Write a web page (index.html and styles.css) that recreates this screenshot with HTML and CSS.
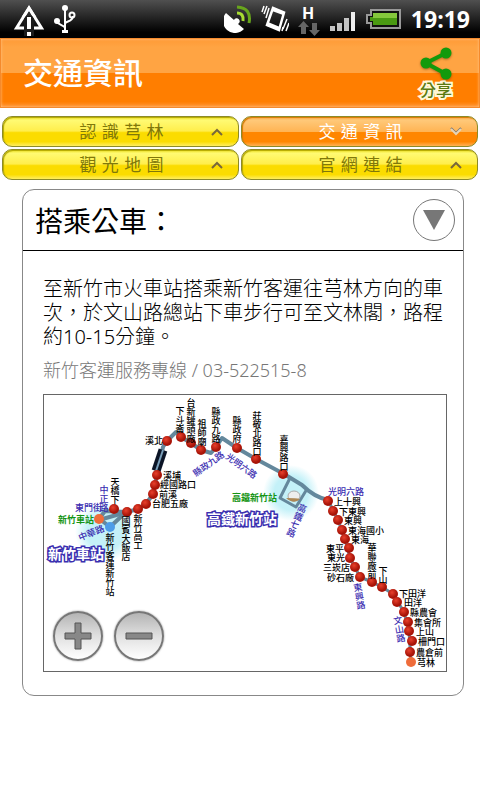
FILE: index.html
```html
<!DOCTYPE html>
<html lang="zh-Hant">
<head>
    <meta charset="UTF-8">
    <meta name="viewport" content="width=device-width, initial-scale=1">
    <title>交通資訊</title>
    <link rel="stylesheet" href="styles.css">
</head>
<body>
    <div class="status-bar">
        <svg width="32" height="34" viewBox="0 0 32 34">
            <path d="M3.500 26L16 6L28.500 26Z" fill="none" stroke="#fff" stroke-width="3"/>
            <path d="M11 14h10v20h-10z" fill="#1c1c1c"/>
            <path d="M10 15.500L16 6L22 15.500" fill="none" stroke="#fff" stroke-width="3"/>
            <path d="M14 15h4v12h-4zM14 30h4v4h-4z" fill="#fff"/>
        </svg>
        <svg width="24" height="30" viewBox="0 0 24 30">
            <g fill="none" stroke="#fff" stroke-width="2">
                <path d="M12 4V27M4 17C4 21 12 21 12 24M20 12C20 18 12 17 12 20" />
                <circle cx="19" cy="11" r="2.500"/>
            </g>
            <g fill="#fff">
                <circle cx="12" cy="4" r="3"/>
                <circle cx="4" cy="17" r="3"/>
                <path d="M9 26h6v3h-6z"/>
            </g>
        </svg>
        <div class="status-right">
            <svg width="28" height="28" viewBox="0 0 28 28">
                <path d="M2 8A12 12 0 0 0 20 24L14 19A3 3 0 1 0 10 15Z" fill="#fff"/>
                <path d="M13 8Q20 8 19 16" fill="none" stroke="#a7dc32" stroke-width="3"/>
                <path d="M13 2Q28 3 25 18" fill="none" stroke="#68a51c" stroke-width="3"/>
            </svg>
            <svg width="28" height="28" viewBox="0 0 28 28">
                <path d="M12 3L23 7.500L18 25L6 20Z" fill="none" stroke="#fff" stroke-width="2.500"/>
                <path d="M12 3L23 7L22 10L11 6ZM7 17L19 22L18 25L6 21Z" fill="#fff"/>
                <path d="M6 1L3 9M3 1L1 7M8 3L5 13M26 14L22 24M28 18L25 26M22 22L21 26" fill="none" stroke="#fff" stroke-width="1.500"/>
            </svg>
            <svg class="icon-data" width="22" height="34" viewBox="0 0 22 34">
                <text x="10" y="17" text-anchor="middle">H</text>
                <path d="M5.500 19L11 25H8V32H3V25H0ZM16.500 34L11 28H14V21H19V28H22Z" fill="#666"/>
            </svg>
            <svg width="28" height="28" viewBox="0 0 28 28">
                <path d="M1 21h5v5h-5zM8 18h5v8h-5zM15 13h5v13h-5z" fill="#c4c4c4"/>
                <path d="M22 7h4v19h-4z" fill="#eee"/>
            </svg>
            <svg width="36" height="22" viewBox="0 0 36 22">
                <path d="M5 2H34V20H5V15H1V7H5Z" fill="#111" stroke="#999" stroke-width="2"/>
                <path d="M7 5H31V17H7V13H4V9H7Z" fill="#4a9a12"/>
                <path d="M7 5H31V10H7Z" fill="#85c83c"/>
            </svg>
            <span class="clock">19:19</span>
        </div>
    </div>

    <header class="app-header">
        <h1>交通資訊</h1>
        <button type="button" class="share-btn">
            <svg width="34" height="34" viewBox="0 0 34 34">
                <path d="M27 7L7 17L27 28" fill="none" stroke="#129a0c" stroke-width="4"/>
                <g fill="#129a0c">
                    <circle cx="27" cy="7" r="5.500"/>
                    <circle cx="7" cy="17" r="5.500"/>
                    <circle cx="27" cy="28" r="5.500"/>
                </g>
            </svg>
            <span>分享</span>
        </button>
    </header>

    <nav class="tabs">
        <button type="button" class="tab">認 識 芎 林
            <svg class="chevron" width="14" height="10" viewBox="0 0 14 10"><path d="M2 8L7 3L12 8"/></svg>
        </button>
        <button type="button" class="tab active">交 通 資 訊
            <svg class="chevron" width="14" height="10" viewBox="0 0 14 10"><path d="M2 2L7 7L12 2"/></svg>
        </button>
        <button type="button" class="tab">觀 光 地 圖
            <svg class="chevron" width="14" height="10" viewBox="0 0 14 10"><path d="M2 8L7 3L12 8"/></svg>
        </button>
        <button type="button" class="tab">官 網 連 結
            <svg class="chevron" width="14" height="10" viewBox="0 0 14 10"><path d="M2 8L7 3L12 8"/></svg>
        </button>
    </nav>

    <main class="card">
        <div class="card-header">
            <h2>搭乘公車：</h2>
            <button type="button" class="toggle-btn" aria-label="收合">
                <svg width="22" height="20" viewBox="0 0 22 20"><path d="M0 0H22L11 20Z" fill="#777"/></svg>
            </button>
        </div>
        <div class="card-body">
            <p class="directions">至新竹市火車站搭乘新竹客運往芎林方向的車次，於文山路總站下車步行可至文林閣，路程約10-15分鐘。</p>
            <p class="phone">新竹客運服務專線 / 03-522515-8</p>

            <div class="map">
                <svg class="route-map" viewBox="0 0 402 276">
                    <defs>
                        <radialGradient id="stop" cx="40%" cy="35%">
                            <stop offset="0" stop-color="#e8402c"/>
                            <stop offset="1" stop-color="#a81408"/>
                        </radialGradient>
                        <radialGradient id="glow">
                            <stop offset="0.6" stop-color="#c4f1f8"/>
                            <stop offset="1" stop-color="#c4f1f8" stop-opacity="0"/>
                        </radialGradient>
                    </defs>

                    <circle cx="61" cy="137" r="30" fill="url(#glow)"/>
                    <circle cx="247" cy="98" r="28" fill="url(#glow)"/>

                    <!-- route -->
                    <g class="route">
                        <path d="M55 125L83 117L94 114L102 109L109 99L113 80L119 52L123 46L132 37L137 42L147 48L157 55L167 58L172 52L178 43L193 53L212 64L240 79L258 90Q270 102 284 105"/>
                        <path d="M55 124L61 116L82 117L66 132L57 125"/>
                        <path d="M246 83L236 103L252 112L263 94" class="thin"/>
                        <path d="M284 105L294 125L301 144L306 163L316 182L328 187L338 192L349 199L360 217L365 236L367 267" class="thin"/>
                    </g>
                    <path d="M119 55L112 76" stroke="#0b1426" stroke-width="9"/>
                    <path d="M119 55L112 76" stroke="#7ba0bb" stroke-width="2"/>
                    <ellipse cx="250" cy="101" rx="6" ry="5" fill="#eee" stroke="#aaa"/>
                    <path d="M242 103Q250 110 256 104Q252 103 242 103" fill="#ad8855"/>

                    <!-- stops -->
                    <g fill="url(#stop)">
                        <circle cx="70" cy="114" r="5"/>
                        <circle cx="83" cy="117" r="5"/>
                        <circle cx="94" cy="114" r="5"/>
                        <circle cx="102" cy="109" r="5"/>
                        <circle cx="109" cy="99" r="5"/>
                        <circle cx="111" cy="90" r="5"/>
                        <circle cx="113" cy="80" r="5"/>
                        <circle cx="123" cy="46" r="5"/>
                        <circle cx="137" cy="42" r="5"/>
                        <circle cx="147" cy="48" r="5"/>
                        <circle cx="157" cy="55" r="5"/>
                        <circle cx="172" cy="52" r="5"/>
                        <circle cx="193" cy="53" r="5"/>
                        <circle cx="212" cy="64" r="5"/>
                        <circle cx="239" cy="79" r="5"/>
                        <circle cx="284" cy="106" r="5"/>
                        <circle cx="289" cy="116" r="5"/>
                        <circle cx="294" cy="125" r="5"/>
                        <circle cx="298" cy="135" r="5"/>
                        <circle cx="301" cy="144" r="5"/>
                        <circle cx="305" cy="153" r="5"/>
                        <circle cx="306" cy="163" r="5"/>
                        <circle cx="311" cy="172" r="5"/>
                        <circle cx="316" cy="182" r="5"/>
                        <circle cx="328" cy="187" r="5"/>
                        <circle cx="338" cy="192" r="5"/>
                        <circle cx="349" cy="199" r="5"/>
                        <circle cx="353" cy="207" r="5"/>
                        <circle cx="360" cy="217" r="5"/>
                        <circle cx="364" cy="227" r="5"/>
                        <circle cx="365" cy="236" r="5"/>
                        <circle cx="368" cy="246" r="5"/>
                        <circle cx="366" cy="257" r="5"/>
                    </g>
                    <circle cx="55" cy="124" r="5" fill="#ef6c3a"/>
                    <circle cx="367" cy="267" r="5" fill="#ef6c3a"/>
                    <circle cx="66" cy="132" r="5" fill="#4d9de8"/>

                    <!-- stop names -->
                    <g class="label">
                        <text x="101" y="49">溪北</text>
                        <text x="119" y="84">溪埔</text>
                        <text x="116" y="93">經國路口</text>
                        <text x="115" y="103">前溪</text>
                        <text x="108" y="112">台肥五廠</text>
                        <text x="290" y="110">上十興</text>
                        <text x="295" y="120">下東興</text>
                        <text x="300" y="129">東興</text>
                        <text x="304" y="139">東海國小</text>
                        <text x="307" y="148">東海</text>
                        <text x="282" y="157">東平</text>
                        <text x="283" y="166">東光</text>
                        <text x="279" y="176">三崁店</text>
                        <text x="283" y="186">砂石廠</text>
                        <text x="355" y="202">下田洋</text>
                        <text x="360" y="211">田洋</text>
                        <text x="366" y="221">縣農會</text>
                        <text x="370" y="231">集會所</text>
                        <text x="372" y="240">上山</text>
                        <text x="374" y="250">柵門口</text>
                        <text x="372" y="261">農倉前</text>
                        <text x="373" y="271">芎林</text>
                    </g>
                    <g class="label vertical">
                        <text x="136" y="11">下斗崙</text>
                        <text x="147" y="3">台新罐頭廠</text>
                        <text x="158" y="24">祖師廟</text>
                        <text x="172" y="12">縣政九路</text>
                        <text x="193" y="21">縣政府</text>
                        <text x="213" y="16">莊敬北路口</text>
                        <text x="240" y="40">嘉興路口</text>
                        <text x="71" y="82">天橋下</text>
                        <text x="66" y="138">新竹客運新竹站</text>
                        <text x="82" y="121">國賓大飯店</text>
                        <text x="94" y="119">新竹高工</text>
                        <text x="328" y="148">華聯廠前</text>
                        <text x="339" y="171">下山</text>
                    </g>

                    <!-- roads -->
                    <g class="label road">
                        <text x="31" y="116">東門街</text>
                        <text x="284" y="100">光明六路</text>
                        <text transform="translate(36 146) rotate(-22)">中華路</text>
                        <text transform="translate(152 82) rotate(-36)">縣政九路</text>
                        <text transform="translate(181 63) rotate(36)">光明六路</text>
                        <g class="vertical">
                            <text x="60" y="90">中正路</text>
                            <text transform="translate(313 188) rotate(-10)">東興路</text>
                            <text transform="translate(353 221) rotate(-10)">文山路</text>
                            <text transform="translate(260 109) rotate(24)">高鐵七路</text>
                        </g>
                    </g>

                    <!-- stations -->
                    <g class="label station">
                        <text x="14" y="128">新竹車站</text>
                        <text x="188" y="106">高鐵新竹站</text>
                    </g>
                    <g class="label landmark">
                        <text x="4" y="164">新竹車站</text>
                        <text x="163" y="129">高鐵新竹站</text>
                    </g>
                </svg>
                <div class="zoom-controls">
                    <button type="button" class="zoom-btn" aria-label="放大">
                        <svg width="28" height="28" viewBox="0 0 28 28"><path d="M11 1H17V11H27V17H17V27H11V17H1V11H11Z"/></svg>
                    </button>
                    <button type="button" class="zoom-btn" aria-label="縮小">
                        <svg width="28" height="28" viewBox="0 0 28 28"><path d="M1 11H27V17H1Z"/></svg>
                    </button>
                </div>
            </div>
        </div>
    </main>
</body>
</html>
```

FILE: styles.css
```css
:root {
    --orange: #ff7e00;
    --light-orange: #ffa443;
    --yellow: #fbdc00;
    --olive: #80780a;
    --grey: #777;
}

* {
    margin: 0;
    padding: 0;
    box-sizing: border-box;
}

body {
    background: #fff;
    color: #000;
    font-family: "Noto Sans", "Noto Sans CJK TC", sans-serif;
}

button {
    border: none;
    background: none;
    font-family: inherit;
    cursor: pointer;
}

svg {
    display: block;
}

/* status bar */
.status-bar {
    display: flex;
    align-items: center;
    gap: 8px;
    height: 38px;
    padding: 0 10px 0 13px;
    background: linear-gradient(#505050, #1c1c1c 55%, #000 85%);
}

.status-right {
    display: flex;
    align-items: center;
    gap: 9px;
    margin-left: auto;
}

.icon-data text {
    font: bold 16px "Open Sans", sans-serif;
    fill: #fff;
}

.clock {
    color: #fff;
    font: bold 23px "Open Sans", sans-serif;
}

/* header */
.app-header {
    display: flex;
    justify-content: space-between;
    align-items: center;
    height: 70px;
    padding: 0 26px 0 22px;
    border: 1px solid #f58a2c;
    background: linear-gradient(#ff9a35, var(--light-orange) 12%, var(--light-orange) 50%, var(--orange) 50%, var(--orange) 92%, #ff9433);
    box-shadow: inset 0 0 3px #ffc48a;
}

.app-header h1 {
    color: #fff;
    font-size: 30px;
    font-weight: 500;
    line-height: 70px;
}

.share-btn {
    display: flex;
    flex-direction: column;
    align-items: center;
}

.share-btn svg {
    filter: drop-shadow(0 1px 1px rgba(90, 50, 0, 0.5));
}

.share-btn span {
    color: #5a7a10;
    font-size: 16px;
    font-weight: 500;
    line-height: 20px;
    -webkit-text-stroke: 4px #fff8d8;
    paint-order: stroke fill;
}

/* tabs */
.tabs {
    display: grid;
    grid-template-columns: 1fr 1fr;
    gap: 2px;
    padding: 8px 2px;
}

.tab {
    position: relative;
    height: 31px;
    padding-left: 2px;
    border: 1px solid #8c8a28;
    border-radius: 10px;
    background: linear-gradient(#f3e62c, #fffa72 12%, #ffee4c 48%, var(--yellow) 54%, var(--yellow) 85%, #ffee60);
    box-shadow: inset 1px 1px 1px #b4a800;
    color: var(--olive);
    font-family: "DejaVu Sans", "Noto Sans CJK TC", sans-serif;
    font-size: 17px;
    line-height: 28px;
}

.tab.active {
    background: linear-gradient(#ffb04c, #ffc878 12%, #ffb454 50%, #ff8600 52%, #ff8600 85%, #ffb254);
    box-shadow: inset 1px 1px 1px #d87800;
    color: #fff;
}

.chevron {
    position: absolute;
    top: 10px;
    right: 14px;
    fill: none;
    stroke: #78683c;
    stroke-width: 2;
}

.active .chevron {
    stroke: #e8d4b4;
    filter: drop-shadow(0 -1px 0 #777);
}

/* card */
.card {
    margin: 1px 16px 0 22px;
    border: 1px solid #888;
    border-radius: 12px;
}

.card-header {
    display: flex;
    justify-content: space-between;
    align-items: center;
    height: 61px;
    padding: 0 8px 0 12px;
    border-bottom: 1px solid #000;
}

.card-header h2 {
    font-family: "Noto Sans CJK TC", sans-serif;
    font-size: 28px;
    font-weight: 400;
}

.toggle-btn {
    display: flex;
    justify-content: center;
    align-items: center;
    width: 42px;
    height: 42px;
    border: 1px solid var(--grey);
    border-radius: 50%;
}

.card-body {
    padding: 26px 16px 23px 20px;
}

.directions {
    font-size: 20px;
    font-weight: 300;
    line-height: 24px;
}

.phone {
    margin: 9px 0 12px;
    color: var(--grey);
    font-size: 18px;
    font-weight: 300;
    line-height: 24px;
}

/* map */
.map {
    position: relative;
    border: 1px solid #666;
}

.route-map {
    width: 100%;
    height: auto;
}

.route path {
    fill: none;
    stroke: #64889c;
    stroke-width: 4;
    stroke-linejoin: round;
}

.route .thin {
    stroke-width: 3;
}

.label {
    font-family: "Noto Sans CJK TC", sans-serif;
    font-size: 9px;
    font-weight: 500;
    fill: #000;
}

.vertical {
    writing-mode: vertical-rl;
}

.road {
    fill: #3a2cb0;
}

.station {
    font-weight: 700;
    fill: #149414;
}

.landmark {
    font-size: 14px;
    font-weight: 700;
    fill: #fff;
    stroke: #3b30b0;
    stroke-width: 3;
    paint-order: stroke;
}

.zoom-controls {
    position: absolute;
    left: 9px;
    bottom: 10px;
    display: flex;
    gap: 11px;
}

.zoom-btn {
    display: flex;
    justify-content: center;
    align-items: center;
    width: 50px;
    height: 50px;
    border: 2px solid #777;
    border-radius: 50%;
    background: linear-gradient(#b4b4b4, #e0e0e0 50%, #fff);
    box-shadow: 0 0 2px #888;
}

.zoom-btn path {
    fill: #888;
    stroke: #555;
    stroke-width: 1;
}
```
